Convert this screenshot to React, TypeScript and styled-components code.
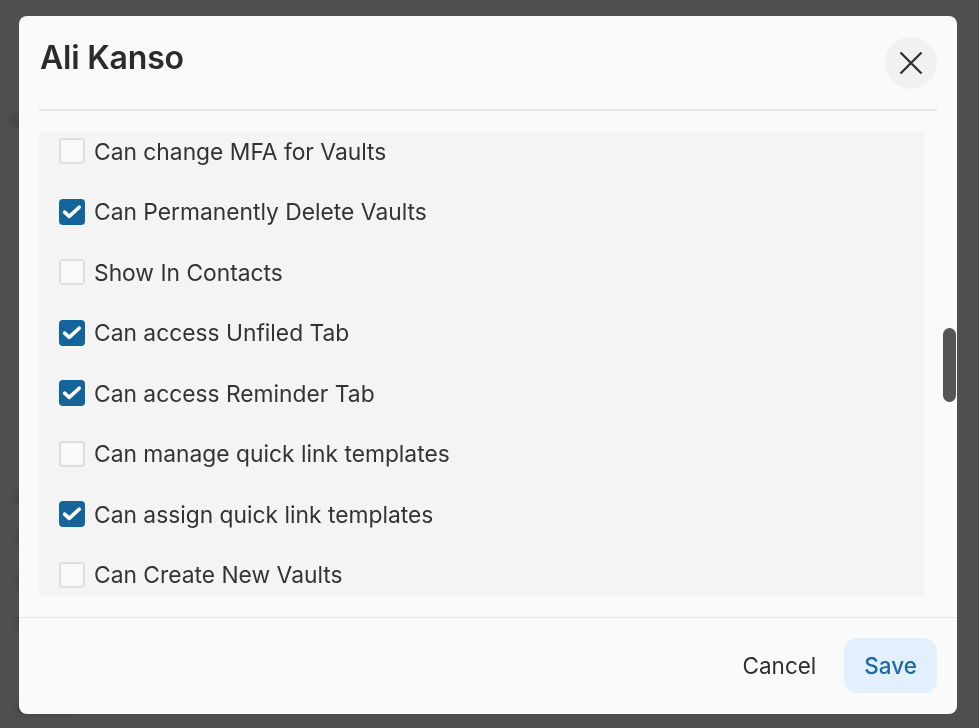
import React from "react";
import styled, {createGlobalStyle} from "styled-components";

const GlobalStyle = createGlobalStyle`
  html, body {
    margin: 0;
    padding: 0;
    height: 100%;
    overflow: hidden;
  }

  body {
    font-family: Inter, "Noto Sans", "Liberation Sans", sans-serif;
    background: #ffffff;
  }
`;

const BackPage = styled.div`
  height: 100vh;
  overflow: hidden;
  padding: 110px 10px 0 10px;
  box-sizing: border-box;
  display: flex;
  flex-direction: column;
  gap: 22px;
  color: #8a8a8a;
  font-size: 17px;
`;

const BackLine = styled.div<{ $indent?: number }>`
  padding-left: ${p => p.$indent ?? 0}px;
  white-space: nowrap;
`;

const Overlay = styled.div`
  position: fixed;
  inset: 0;
  background: rgba(0, 0, 0, 0.69);
  backdrop-filter: blur(3px);
  padding: 16px 22px 14px 19px;
  box-sizing: border-box;
  display: flex;
`;

const Modal = styled.div`
  position: relative;
  flex: 1;
  background: #fafafa;
  border-radius: 8px;
  display: flex;
  flex-direction: column;
  overflow: hidden;
`;

const Header = styled.div`
  display: flex;
  align-items: flex-start;
  justify-content: space-between;
  padding: 21px 20px 20px 21px;
`;

const Title = styled.h2`
  margin: 1px 0 0;
  font-size: 32px;
  line-height: 40px;
  font-weight: 600;
  color: #2b2b2b;
  letter-spacing: -0.2px;
`;

const CloseButton = styled.button`
  width: 52px;
  height: 52px;
  border: none;
  border-radius: 50%;
  background: #f1f1f1;
  display: flex;
  align-items: center;
  justify-content: center;
  padding: 0;
  cursor: pointer;
`;

const Divider = styled.div`
  height: 2px;
  margin: 0 20px;
  background: #e6e6e6;
`;

const Body = styled.div`
  flex: 1;
  padding: 20px 33px 20px 20px;
  display: flex;
  min-height: 0;
`;

const Panel = styled.div`
  flex: 1;
  background: #f4f4f4;
  display: flex;
  flex-direction: column;
  gap: 20.57px;
  padding-left: 20px;
  overflow: hidden;
`;

const Row = styled.label`
  height: 40px;
  flex-shrink: 0;
  display: flex;
  align-items: center;
  gap: 9px;
  font-size: 22.8px;
  color: #333333;
  cursor: pointer;
`;

const Box = styled.span<{ $checked: boolean }>`
  width: 26px;
  height: 26px;
  box-sizing: border-box;
  border-radius: 4px;
  flex-shrink: 0;
  display: flex;
  align-items: center;
  justify-content: center;
  background: ${p => (p.$checked ? "#13649a" : "#f9f9f9")};
  border: ${p => (p.$checked ? "none" : "2px solid #dedede")};
`;

const ScrollThumb = styled.div`
  position: absolute;
  right: 1px;
  top: 312px;
  width: 13px;
  height: 74px;
  border-radius: 7px;
  background: #555555;
`;

const Footer = styled.div`
  border-top: 1px solid #e4e4e4;
  padding: 20px 20px 21px;
  display: flex;
  justify-content: flex-end;
  gap: 8px;
`;

const Button = styled.button<{ $primary?: boolean }>`
  height: 55px;
  padding: 0 20px;
  border: none;
  border-radius: 13px;
  font-family: inherit;
  font-size: 22.5px;
  font-weight: ${p => (p.$primary ? 500 : 400)};
  color: ${p => (p.$primary ? "#1a6b9f" : "#2e2e2e")};
  background: ${p => (p.$primary ? "#e2effc" : "transparent")};
  cursor: pointer;
`;

const CheckIcon = () => (
    <svg width="26" height="26" viewBox="0 0 26 26">
        <path d="M5.6 13.2 L10.2 17.4 L20.2 8.2" fill="none" stroke="#ffffff" strokeWidth="3.6"
              strokeLinecap="round" strokeLinejoin="round"/>
    </svg>
);

const CloseIcon = () => (
    <svg width="24" height="24" viewBox="0 0 24 24">
        <path d="M1.5 1.5 L22.5 22.5 M22.5 1.5 L1.5 22.5" stroke="#2f2f2f" strokeWidth="2.3"/>
    </svg>
);

const permissions: { label: string; checked: boolean }[] = [
    {label: "Can change MFA for Vaults", checked: false},
    {label: "Can Permanently Delete Vaults", checked: true},
    {label: "Show In Contacts", checked: false},
    {label: "Can access Unfiled Tab", checked: true},
    {label: "Can access Reminder Tab", checked: true},
    {label: "Can manage quick link templates", checked: false},
    {label: "Can assign quick link templates", checked: true},
    {label: "Can Create New Vaults", checked: false},
];

const backLines = [
    "User settings",
    "", "", "", "", "", "", "", "",
    "Permissions",
    "Can view",
    "Can edit",
    "Can add",
    "",
    "Access",
    "Can share",
    "Can move",
    "Can export",
    "Can access document download",
];

const App: React.FC = () => {
    return <>
        <GlobalStyle/>
        <BackPage>
            {backLines.map((line, i) => (
                <BackLine key={i} $indent={i === 0 ? 0 : 6}>{line || "\u00a0"}</BackLine>
            ))}
        </BackPage>
        <Overlay>
            <Modal>
                <Header>
                    <Title>Ali Kanso</Title>
                    <CloseButton aria-label="Close">
                        <CloseIcon/>
                    </CloseButton>
                </Header>
                <Divider/>
                <Body>
                    <Panel>
                        {permissions.map(p => (
                            <Row key={p.label}>
                                <Box $checked={p.checked}>{p.checked && <CheckIcon/>}</Box>
                                {p.label}
                            </Row>
                        ))}
                    </Panel>
                </Body>
                <Footer>
                    <Button>Cancel</Button>
                    <Button $primary>Save</Button>
                </Footer>
                <ScrollThumb/>
            </Modal>
        </Overlay>
    </>;
};

export default App;
